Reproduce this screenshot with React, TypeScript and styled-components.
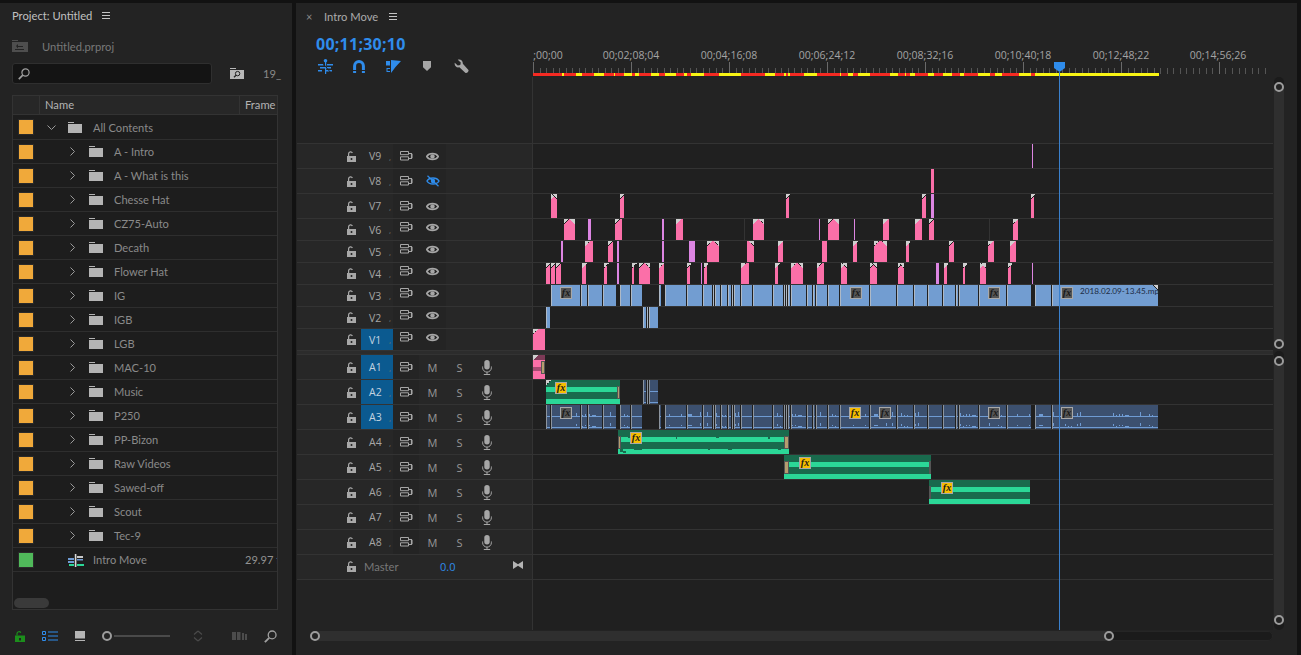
import React from "react";
import styled, { createGlobalStyle } from "styled-components";

const Global = createGlobalStyle`
  html, body { margin: 0; padding: 0; background: #121212; overflow: hidden; }
  * { box-sizing: border-box; }
`;

const FONT = `"Open Sans", "Noto Sans", "Liberation Sans", sans-serif`;
const UI = `Lato, "Open Sans", "Liberation Sans", sans-serif`;

const Root = styled.div`
  width: 1301px; height: 655px; padding: 3px 4px 0 0; display: grid;
  grid-template-columns: 292px 1fr; column-gap: 4px; background: #121212;
  font-family: ${FONT}; font-size: 11px; color: #a8a8a8; overflow: hidden;
`;
const ProjectPanel = styled.section`
  background: #232323; padding: 0 14px 0 12px; display: flex; flex-direction: column; height: 652px; font-family: ${UI};
`;
const TitleRow = styled.div`
  height: 25px; margin-bottom: 1px; display: flex; align-items: center; gap: 10px; color: #c0c0c0; font-size: 11.2px;
`;
const MenuIcon = styled.span`
  display: inline-block; width: 8px; height: 7px; border-top: 1px solid #c4c4c4; border-bottom: 1px solid #c4c4c4; position: relative;
  &::after { content: ""; position: absolute; left: 0; right: 0; top: 2px; height: 1px; background: #c4c4c4; }
`;
const PathRow = styled.div`
  margin-top: 7px; height: 20px; display: flex; align-items: center; gap: 14px; color: #787878; font-size: 11.2px;
`;
const SearchRow = styled.div`
  margin-top: 7px; height: 21px; display: flex; align-items: center; color: #a0a0a0;
  svg { flex: none; }
`;
const SearchBox = styled.div`
  width: 200px; flex: none; height: 21px; background: #141414; border: 1px solid #2f2f2f; border-radius: 3px;
  display: flex; align-items: center; padding-left: 5px; margin-right: 18px;
`;
const CountLabel = styled.span` margin-left: 19px; font-size: 11.2px; color: #8a8a8a; white-space: nowrap; `;
const Table = styled.div`
  margin-top: 11px; height: 515px; border: 1px solid #333; background: #1d1d1d; position: relative; overflow: hidden;
`;
const HeaderRow = styled.div`
  display: grid; grid-template-columns: 26px 200px 1fr; height: 19px; background: #272727; border-bottom: 1px solid #333;
  font-size: 11.2px; color: #b4b4b4; line-height: 18px;
`;
const HeaderCell = styled.div<{ $sep?: boolean }>`
  padding-left: 5px; border-left: ${p => (p.$sep ? "1px solid #333" : "none")}; overflow: hidden; white-space: nowrap;
`;
const BinRow = styled.div<{ $first?: boolean }>`
  height: ${p => (p.$first ? 25 : 24)}px; border-bottom: 1px solid #2e2e2e; display: flex; align-items: center; position: relative; color: #8a8a8a; font-size: 11.1px;
`;
const Swatch = styled.span<{ $c: string }>`
  width: 16px; height: 16px; margin-left: 5px; background: ${p => p.$c}; border: 1px solid #2a2a2a; flex: none;
`;
const Chevron = styled.span<{ $w: number }>`
  width: ${p => p.$w}px; flex: none; display: flex; justify-content: flex-end; color: #9a9a9a;
`;
const FolderWrap = styled.span<{ $l: number; $r?: number }>`
  margin-left: ${p => p.$l}px; margin-right: ${p => p.$r ?? 11}px; display: flex; flex: none;
`;
const RateCell = styled.span`
  position: absolute; left: 232px; right: 0; overflow: hidden; white-space: nowrap; color: #929292;
`;
const ScrollThumb = styled.div`
  position: absolute; left: 1px; bottom: 1px; width: 35px; height: 10px; background: #3a3a3a; border-radius: 5px;
`;
const Footer = styled.div`
  margin-top: 20px; height: 12px; display: flex; align-items: center;
`;
const FootItem = styled.span<{ $w: number; $c?: string; $pad?: number }>`
  width: ${p => p.$w}px; flex: none; display: flex; align-items: center; color: ${p => p.$c || "#a0a0a0"}; padding-left: ${p => p.$pad ?? 0}px;
`;
const ZoomLine = styled.span`
  width: 56px; height: 2px; background: #4a4a4a; margin-left: 2px; flex: none;
`;
const Ring = styled.span`
  width: 10px; height: 10px; border-radius: 50%; border: 2.5px solid #9c9c9c; background: #232323; flex: none; display: block;
`;

const TimelinePanel = styled.section`
  background: #232323; padding-left: 1px; height: 652px; display: flex; flex-direction: column;
`;
const TabBar = styled.div`
  height: 30px; display: flex; align-items: center; padding-left: 9px; padding-bottom: 3px; color: #ababab; font-size: 11.2px; font-family: ${UI};
`;
const CloseMark = styled.span` width: 18px; color: #8c8c8c; font-size: 11px; `;
const TabMenu = styled.span` margin-left: 11px; display: flex; `;
const Work = styled.div`
  display: grid; grid-template-columns: 976px 10px; column-gap: 1px; height: 597px;
`;
const Stage = styled.div` position: relative; display: flex; flex-direction: column; `;
const Head = styled.div` height: 110px; display: grid; grid-template-columns: 236px 740px; `;
const HeadLeft = styled.div` display: flex; flex-direction: column; `;
const Timecode = styled.div`
  height: 22px; line-height: 22px; padding-left: 19px; color: #2f8ceb; font-size: 16px; font-weight: 700; letter-spacing: 0.25px;
`;
const Tools = styled.div` padding-left: 11px; display: flex; height: 22px; align-items: center; `;
const Tool = styled.span<{ $c?: string }>`
  width: 34px; display: flex; justify-content: center; color: ${p => p.$c || "#a6a6a6"};
`;
const Ruler = styled.div`
  padding-top: 15px; display: flex; flex-direction: column;
`;
const RulerLabels = styled.div` height: 14px; position: relative; `;
const RulerLabel = styled.span<{ $x: number }>`
  position: absolute; left: ${p => p.$x}px; top: 0; transform: translateX(-50%); color: #a4a4a4; font-size: 10.5px; line-height: 14px; white-space: nowrap;
`;
const RulerBelow = styled.div` flex: 1; border-left: 1px solid #333; margin-left: -1px; `;
const RulerSvg = styled.svg` display: block; flex: none; `;

const Row = styled.div<{ $h: number; $audio?: boolean }>`
  height: ${p => p.$h}px; flex: none; display: grid; grid-template-columns: 236px 740px;
  border-top: ${p => (p.$audio ? "none" : "1px solid #333")};
  border-bottom: ${p => (p.$audio ? "1px solid #333" : "none")};
`;
const TrackHead = styled.div`
  background: #272727; border-right: 1px solid #333; display: grid;
  grid-template-columns: 46px 16px 2px 32px 26px 27px 27px 28px 1fr; align-items: center; 
`;
const LockCell = styled.span` grid-column: 2; display: flex; justify-content: center; color: #a8a8a8; `;
const NameCell = styled.span<{ $on?: boolean }>`
  grid-column: 4; align-self: stretch; display: flex; align-items: center; padding-left: 8px;
  background: ${p => (p.$on ? "#0b5a90" : "transparent")}; color: ${p => (p.$on ? "#c4d4e0" : "#a6a6a6")}; font-size: 10.5px;
`;
const NameDot = styled.span` margin-left: auto; padding-right: 2px; font-size: 8px; color: #777; `;
const IconCell = styled.span<{ $col: number; $c?: string; $lift?: boolean; $bare?: boolean }>`
  grid-column: ${p => p.$col}; display: flex; justify-content: center; align-items: center; align-self: stretch;
  color: ${p => p.$c || "#a6a6a6"}; background: ${p => (p.$bare ? "transparent" : "#242424")}; padding-bottom: ${p => (p.$lift ? "5px" : "0")};
`;
const LetterCell = styled(IconCell)` font-size: 11px; color: #979797; background: transparent; `;
const Lane = styled.div` position: relative; overflow: hidden; background: #202020; `;
const Divider = styled.div`
  height: 5px; flex: none; display: grid; grid-template-columns: 976px; background: #2c2c2c; border-top: 1px solid #333; border-bottom: 1px solid #333;
`;
const MasterHead = styled(TrackHead)` padding-bottom: 2px; `;
const MasterName = styled.span`
  grid-column: 4 / 6; color: #787878; font-size: 11.2px; padding-left: 3px; white-space: nowrap; font-family: ${UI};
`;
const MasterValue = styled.span`
  grid-column: 6 / 8; color: #2f8ceb; font-size: 11px; padding-left: 21px;
`;
const Bowtie = styled.span` grid-column: 9; display: flex; justify-content: flex-end; padding: 0 9px 3px 0; color: #b4b4b4; `;
const Filler = styled.div`
  flex: 1; display: grid; grid-template-columns: 236px 740px;
`;
const FillerLeft = styled.div` border-right: 1px solid #333; background: #232323; `;
const FillerLane = styled.div` background: #202020; `;

const Clip = styled.div`
  position: absolute; top: 0; bottom: 0;
`;
const PinkClip = styled(Clip)<{ $violet?: boolean }>`
  background: ${p => (p.$violet ? "#dc85e2" : "#fb6fa8")};
`;
const Corner = styled.span<{ $r?: boolean }>`
  position: absolute; top: 0; width: 5px; height: 5px;
  ${p => (p.$r ? "right: 0;" : "left: 0;")}
  background: linear-gradient(${p => (p.$r ? "225deg" : "135deg")}, #cfcfcf 0 50%, #202020 50% 54%, transparent 54%);
`;
const LaneCorner = styled(Corner)` right: 115px; `;
const BlueClip = styled(Clip)`
  background: #729dd1; border-left: 1px solid #aeb9c6;
`;
const AudioClip = styled(Clip)`
  background:
    linear-gradient(#6f9bd3, #6f9bd3) 0 11px / 100% 1px no-repeat,
    linear-gradient(#6f9bd3, #6f9bd3) 0 22px / 100% 1px no-repeat,
    #3c506f;
  border-left: 1px solid #8c949e;
`;
const GreenClip = styled(Clip)`
  background:
    linear-gradient(#2bd797, #2bd797) 0 7px / 100% 5px no-repeat,
    linear-gradient(#2bd797, #2bd797) 0 19px / 100% 5px no-repeat,
    #196a4d;
`;
const MixedClip = styled(Clip)`
  background: linear-gradient(#7d3a57 0 5px, #fb6fa8 5px 12px, #a84a73 12px 16px, #fb6fa8 16px);
`;
const Handle = styled.span<{ $r?: boolean; $w: number }>`
  position: absolute; top: 6px; height: 13px; width: ${p => p.$w}px; ${p => (p.$r ? "right: 0;" : "left: 0;")}
  background: #b59d6e; border: 1px solid #555;
`;
const Fx = styled.span<{ $on?: boolean; $x: number }>`
  position: absolute; top: 2px; left: ${p => p.$x}px; width: 12px; height: 12px; border: 1px solid #a8a8a8;
  background: ${p => (p.$on ? "#f6bd00" : "#555")}; color: #191919; font: italic 700 10px/10px "Liberation Serif", serif; text-align: center;
`;
const ClipName = styled.span`
  position: absolute; top: 0; left: 547px; color: #1c2c44; font: 8.2px/12px ${UI}; white-space: nowrap;
`;
const Sep = styled.span<{ $x: number }>`
  position: absolute; top: 0; bottom: 0; left: ${p => p.$x}px; width: 1px; background: #333;
`;
const Waves = styled.svg` position: absolute; left: 0; top: 0; `;
const Playhead = styled.div`
  position: absolute; left: 762px; top: 39px; bottom: 0; width: 1px; background: #3a80cc;
`;
const PlayCap = styled.svg` position: absolute; left: -5px; top: -10px; display: block; `;

const VBar = styled.div` padding-top: 44px; display: flex; flex-direction: column; gap: 2px; `;
const VTrack = styled.div<{ $h: number; $pb: number }>`
  height: ${p => p.$h}px; background: #1b1b1b; border-radius: 5px; padding: 10px 0 ${p => p.$pb}px; display: flex;
`;
const Thumb = styled.div`
  flex: 1; background: #2f2f2f; position: relative;
`;
const EndRing = styled(Ring)<{ $pos: string }>` position: absolute; ${p => p.$pos} `;
const HBarRow = styled.div` height: 10px; margin: 1px 0 0 13px; `;
const HTrack = styled.div`
  width: 963px; height: 10px; background: #1b1b1b; border: 1px solid #262626; border-radius: 5px; padding-left: 4px; display: flex;
`;
const HThumb = styled.div` width: 794px; background: #2f2f2f; position: relative; margin: -1px 0; `;

/* ---------- icons ---------- */
const Lock = () => (
  <svg width="9" height="11" viewBox="0 0 9 11"><path d="M0 5h9v6H0z M3.7 7v2h1.6V7z" fill="currentColor" fillRule="evenodd" /><path d="M1.6 5V2.6a2 2 0 0 1 3.8-.6" fill="none" stroke="currentColor" strokeWidth="1.2" /></svg>
);
const Sync = () => (
  <svg width="13" height="10" viewBox="0 0 13 10" fill="none" stroke="currentColor"><path d="M.5.5h8v3.2h-8zM.5 5.8h8V9h-8z" /><path d="M8.5 2.5h3v5h-3" strokeWidth="1.2" /><path d="M11 3v4h1.5V3z" fill="currentColor" stroke="none" /></svg>
);
const Eye = () => (
  <svg width="13" height="9" viewBox="0 0 13 9"><path d="M.7 4.5C3 .6 10 .6 12.3 4.5 10 8.4 3 8.4.7 4.5Z" fill="none" stroke="currentColor" strokeWidth="1.5" /><circle cx="6.5" cy="4.5" r="2.2" fill="currentColor" /></svg>
);
const EyeOff = () => (
  <svg width="14" height="12" viewBox="0 0 14 12"><path d="M1 6C3.3 2 10.7 2 13 6 10.7 10 3.3 10 1 6Z" fill="none" stroke="currentColor" strokeWidth="1.5" /><circle cx="7" cy="6" r="2.2" fill="currentColor" /><path d="M1.5.8 12.5 11.2" stroke="currentColor" strokeWidth="1.2" /></svg>
);
const Mic = () => (
  <svg width="10" height="15" viewBox="0 0 10 15"><rect x="2.3" y="0" width="5.4" height="9.5" rx="2.7" fill="currentColor" /><path d="M.6 6.5v1.2a4.4 4.4 0 0 0 8.8 0V6.5M5 12v2.3M1.8 14.5h6.4" fill="none" stroke="currentColor" /></svg>
);
const Menu3 = () => <MenuIcon />;
const Folder = () => (
  <svg width="14" height="11" viewBox="0 0 14 11"><path d="M0 0h6v1H0zM0 2h14v9H0z" fill="#b4b4b4" /></svg>
);
const ChevR = () => (
  <svg width="5" height="9" viewBox="0 0 5 9"><path d="M.5.5l4 4-4 4" fill="none" stroke="currentColor" /></svg>
);
const ChevD = () => (
  <svg width="9" height="5" viewBox="0 0 9 5"><path d="M.5.5l4 4 4-4" fill="none" stroke="currentColor" /></svg>
);
const SeqIcon = () => (
  <svg width="16" height="14" viewBox="0 0 16 14"><path d="M0 5h6v2H0zM0 8h6v2H0z" fill="#6f9bd3" /><path d="M9 3h6v2H9z" fill="#c8c8c8" /><path d="M9 6h6v1.5H9z" fill="#6f9bd3" /><path d="M1 11h5v2H1zM9 11h7v2H9z" fill="#2bd797" /><path d="M6.8 1h1.6v13H6.8z" fill="#d8d8d8" /></svg>
);
const Loupe = ({ s = 12 }: { s?: number }) => (
  <svg width={s} height={s} viewBox="0 0 12 12" fill="none" stroke="currentColor" strokeWidth="1.2"><circle cx="7.5" cy="4.5" r="3.6" /><path d="M4.8 7.2.8 11.2" strokeWidth="1.7" /></svg>
);
const UpFolder = () => (
  <svg width="16" height="12" viewBox="0 0 16 12"><path d="M0 0h6v1H0zM0 2h16v10H0z" fill="#4e4e4e" /><path d="M4 6 6 4v2h5v1H6v1.5z M3 9h9v1H3z" fill="#232323" /></svg>
);
const FindBin = () => (
  <svg width="14" height="11" viewBox="0 0 14 11"><path d="M0 0h6v1H0z" fill="#b8b8b8" /><path d="M0 2h14v9H0z" fill="#b8b8b8" /><circle cx="7.6" cy="5.6" r="2.2" fill="none" stroke="#232323" /><path d="M6 7.2 4 9.2" stroke="#232323" strokeWidth="1.3" /></svg>
);
const SnapTool = () => (
  <svg width="15" height="15" viewBox="0 0 15 15" fill="currentColor"><circle cx="7.5" cy="1.8" r="1.8" /><path d="M0 5h5.5v1.4H0zM9 5h6v1.4H9zM2 8h11v1.4H2zM0 11h4v1.4H0zM8 11h6v1.4H8z" /><path d="M7 3h1.2v12H7z" /><path d="M3 2 13 14" stroke="#232323" strokeWidth="1" /></svg>
);
const Magnet = () => (
  <svg width="12" height="13" viewBox="0 0 12 13" fill="none"><path d="M1.6 13V6a4.4 4.4 0 0 1 8.8 0v7" stroke="currentColor" strokeWidth="3" /><path d="M0 10h12v1H0z" fill="#232323" /></svg>
);
const LinkTool = () => (
  <svg width="15" height="13" viewBox="0 0 15 13"><path d="M0 1h4v4.5H0zM.5 8h3.5v4H.5z" fill="currentColor" /><path d="M1.5 9h2.5v2H1.5z" fill="#232323" /><path d="M5 0l10 1L9.5 7 5 13z" fill="currentColor" /></svg>
);
const MarkerTool = () => (
  <svg width="8" height="10" viewBox="0 0 8 10"><path d="M0 0h8v6.3L4 10 0 6.3z" fill="currentColor" /></svg>
);
const Wrench = () => (
  <svg width="15" height="15" viewBox="0 0 16 16"><path d="M.8 4 4 7 6.7 6.5 7.2 3.8 4 .8C6.7-.3 9.7 1.6 9.4 5L15.4 11.8C16.2 13 13.6 15.8 12.3 14.8L5.7 8.8C2.6 9.6.1 7 .8 4Z" fill="currentColor" /></svg>
);
const GreenLock = () => (
  <svg width="10" height="11" viewBox="0 0 10 11"><path d="M0 4.5h10V11H0z M4 7v2.5h2V7z" fill="currentColor" fillRule="evenodd" /><path d="M2 4.5V2.6a2 2 0 0 1 3.8-.8" fill="none" stroke="currentColor" strokeWidth="1.2" /></svg>
);
const ListIcon = () => (
  <svg width="16" height="10" viewBox="0 0 16 10" fill="none" stroke="currentColor"><path d="M.5.5h3v3h-3zM.5 6.5h3v3h-3z" /><path d="M6 1h10M6 5h10M6 9h10" /></svg>
);
const ThumbIcon = () => (
  <svg width="10" height="10" viewBox="0 0 10 10"><path d="M0 0h10v7.5H0zM0 9h10v1H0z" fill="#b4b4b4" /></svg>
);
const Diamond = () => (
  <svg width="10" height="12" viewBox="0 0 10 12"><path d="M5 1 9 4.5M5 1 1 4.5M5 11 9 7.5M5 11 1 7.5" stroke="#4a4a4a" strokeWidth="1.2" fill="none" /></svg>
);
const BarsIcon = () => (
  <svg width="15" height="8" viewBox="0 0 15 8"><path d="M0 0h4v8H0zM5 0h3.5v8H5zM10 1h2v7h-2zM13 2h2v6h-2z" fill="#4c4c4c" /></svg>
);
const Hourglass = () => (
  <svg width="10" height="8" viewBox="0 0 10 8"><path d="M0 0 5 3.2 10 0V8L5 4.8 0 8Z" fill="currentColor" /></svg>
);

/* ---------- data ---------- */
const ORIGIN = 533;
type C = [number, number, string?];

const V: Record<string, C[]> = {
  V9: [[1032, 1033, "v"]],
  V8: [[931, 934, "p"]],
  V7: [[551, 557, "lr"], [620, 624, "l"], [786, 789, "l"], [922, 926, "l"], [931, 934, "v"], [1031, 1034, "l"]],
  V6: [[564, 575, "lr"], [588, 591, "v"], [615, 622, "l"], [662, 664, "v"], [676, 683, "l"], [753, 764, "lr"], [819, 820, "v"], [828, 839, "lr"], [854, 855, "v"], [883, 889, "l"], [915, 922, "l"], [929, 934, "l"], [1013, 1018, "l"]],
  V5: [[561, 563, "v"], [585, 593, "l"], [608, 613, "l"], [617, 619, "v"], [662, 664, "v"], [689, 695, "v"], [707, 719, "lr"], [747, 754, "r"], [778, 783, "l"], [822, 827, "p"], [853, 857, "l"], [874, 887, "lr"], [906, 909, "l"], [949, 954, "l"], [988, 994, "l"], [1010, 1016, "l"]],
  V4: [[546, 550, "l"], [551, 555, "l"], [556, 561, "l"], [582, 586, "l"], [604, 607, "l"], [617, 619, "v"], [632, 634, "l"], [639, 650, "lr"], [659, 664, "l"], [687, 690, "l"], [701, 702, "v"], [704, 707, "l"], [741, 749, "l"], [775, 778, "l"], [791, 803, "lr"], [817, 824, "l"], [841, 847, "lr"], [870, 877, "lr"], [898, 904, "lr"], [936, 939, "v"], [944, 947, "l"], [963, 965, "l"], [980, 986, "lr"], [1008, 1011, "l"], [1032, 1033, "v"]],
  V1: [[533, 545, "l"]],
};
const SEGS: [number, number][] = [[551, 580], [581, 587], [588, 602], [603, 616], [620, 630], [631, 642], [659, 661], [665, 686], [687, 702], [703, 712], [713, 714], [715, 720], [721, 727], [728, 731], [732, 733], [734, 740], [741, 752], [753, 772], [773, 783], [784, 785], [786, 787], [788, 790], [791, 806], [807, 812], [813, 815], [816, 827], [828, 839], [840, 869], [870, 896], [897, 913], [914, 927], [928, 942], [943, 955], [956, 958], [959, 978], [979, 1006], [1007, 1031], [1035, 1051], [1052, 1158]];
const V2: [number, number][] = [[546, 550], [643, 646], [647, 648], [649, 658]];
const A2B: [number, number][] = [[643, 646], [647, 648], [649, 658]];
const A3: [number, number][] = [[546, 550], ...SEGS];

const YELLOW: [number, number][] = [[562, 564], [576, 582], [594, 604], [614, 615], [624, 632], [635, 639], [651, 659], [665, 676], [684, 687], [691, 704], [719, 741], [765, 775], [784, 786], [788, 790], [804, 817], [840, 841], [848, 853], [858, 870], [890, 898], [905, 906], [910, 915], [928, 934], [943, 952], [960, 964], [978, 990], [995, 1002], [1019, 1031], [1035, 1159]];
const LABELS: [string, number][] = [["00;02;08;04", 98], ["00;04;16;08", 196], ["00;06;24;12", 294], ["00;08;32;16", 392], ["00;10;40;18", 490], ["00;12;48;22", 588], ["00;14;56;26", 685]];

const BINS = ["A - Intro", "A - What is this", "Chesse Hat", "CZ75-Auto", "Decath", "Flower Hat", "IG", "IGB", "LGB", "MAC-10", "Music", "P250", "PP-Bizon", "Raw Videos", "Sawed-off", "Scout", "Tec-9"];

/* small notches on the green waveform of A4 */
const A4_MARKS: [number, number, number, number][] = [[2, 19, 3, 3], [5, 21, 3, 2], [10, 7, 2, 1], [16, 19, 8, 1], [58, 7, 1, 2], [90, 19, 2, 1], [98, 7, 3, 1], [110, 19, 4, 1], [150, 7, 2, 2], [160, 19, 3, 1]];

function wave(segs: [number, number][]) {
  const out: { x: number; y: number; h: number; w: number }[] = [];
  let n = 7;
  segs.forEach(([a, b]) => {
    for (let x = a + 1; x < b - 1; x += 3) {
      n = (n * 31 + 11) % 97;
      if (n % 3 === 0) {
        const h = 1 + (n % 4);
        const w = n % 11 === 0 ? 4 : 1;
        out.push({ x: x - ORIGIN, y: 11 - h, h, w });
        out.push({ x: x - ORIGIN, y: 22 - h, h: Math.max(1, h - 1), w });
      }
    }
  });
  return out;
}

const at = (a: number, b: number) => ({ left: a - ORIGIN, width: b - a });

const PinkRow = ({ items }: { items: C[] }) => (
  <>
    {items.map(([a, b, k], i) =>
      k === "v" ? (
        <PinkClip key={i} $violet style={at(a, b)} />
      ) : (
        <PinkClip key={i} style={at(a, b)}>
          {k && k.includes("l") && <Corner />}
          {k && k.includes("r") && <Corner $r />}
        </PinkClip>
      )
    )}
  </>
);

const Audio = ({ id, on, children }: { id: string; on?: boolean; children?: React.ReactNode }) => (
  <Row $h={25} $audio>
    <TrackHead>
      <LockCell><Lock /></LockCell>
      <NameCell $on={on}>{id}<NameDot>,</NameDot></NameCell>
      <IconCell $col={5}><Sync /></IconCell>
      <LetterCell $col={6}>M</LetterCell>
      <LetterCell $col={7}>S</LetterCell>
      <IconCell $col={8} $bare><Mic /></IconCell>
    </TrackHead>
    <Lane>{children}</Lane>
  </Row>
);

const Video = ({ id, h, on, hidden, children }: { id: string; h: number; on?: boolean; hidden?: boolean; children?: React.ReactNode }) => (
  <Row $h={h}>
    <TrackHead>
      <LockCell><Lock /></LockCell>
      <NameCell $on={on}>{id}<NameDot>,</NameDot></NameCell>
      <IconCell $col={5} $lift={h < 25}><Sync /></IconCell>
      <IconCell $col={6} $lift={h < 25} $c={hidden ? "#2f8ceb" : undefined}>{hidden ? <EyeOff /> : <Eye />}</IconCell>
    </TrackHead>
    <Lane>{children}</Lane>
  </Row>
);

export default function App() {
  const ticks: number[] = [];
  for (let i = 0; i * 6.533 <= 737; i++) ticks.push(i);
  const a3Wave = wave(A3);
  const a2Wave = wave(A2B);
  return (
    <Root>
      <Global />
      <ProjectPanel>
        <TitleRow>Project: Untitled<Menu3 /></TitleRow>
        <PathRow><UpFolder />Untitled.prproj</PathRow>
        <SearchRow>
          <SearchBox><Loupe /></SearchBox>
          <FindBin />
          <CountLabel>19_</CountLabel>
        </SearchRow>
        <Table>
          <HeaderRow>
            <HeaderCell />
            <HeaderCell $sep>Name</HeaderCell>
            <HeaderCell $sep>Frame</HeaderCell>
          </HeaderRow>
          <BinRow $first>
            <Swatch $c="#f0a93a" />
            <Chevron $w={22}><ChevD /></Chevron>
            <FolderWrap $l={12}><Folder /></FolderWrap>All Contents
          </BinRow>
          {BINS.map(b => (
            <BinRow key={b}>
              <Swatch $c="#f0a93a" />
              <Chevron $w={41}><ChevR /></Chevron>
              <FolderWrap $l={14}><Folder /></FolderWrap>{b}
            </BinRow>
          ))}
          <BinRow>
            <Swatch $c="#50b95a" />
            <Chevron $w={25} />
            <FolderWrap $l={9} $r={9}><SeqIcon /></FolderWrap>Intro Move
            <RateCell>29.97 fps</RateCell>
          </BinRow>
          <ScrollThumb />
        </Table>
        <Footer>
          <FootItem $w={30} $c="#1c8f1c" $pad={3}><GreenLock /></FootItem>
          <FootItem $w={33} $c="#2f8ceb"><ListIcon /></FootItem>
          <FootItem $w={27}><ThumbIcon /></FootItem>
          <FootItem $w={91}><Ring /><ZoomLine /></FootItem>
          <FootItem $w={39}><Diamond /></FootItem>
          <FootItem $w={32}><BarsIcon /></FootItem>
          <FootItem $w={14}><Loupe s={13} /></FootItem>
        </Footer>
      </ProjectPanel>

      <TimelinePanel>
        <TabBar>
          <CloseMark>×</CloseMark>Intro Move<TabMenu><Menu3 /></TabMenu>
        </TabBar>
        <Work>
          <Stage>
            <Head>
              <HeadLeft>
                <Timecode>00;11;30;10</Timecode>
                <Tools>
                  <Tool $c="#2f8ceb"><SnapTool /></Tool>
                  <Tool $c="#2f8ceb"><Magnet /></Tool>
                  <Tool $c="#2f8ceb"><LinkTool /></Tool>
                  <Tool><MarkerTool /></Tool>
                  <Tool><Wrench /></Tool>
                </Tools>
              </HeadLeft>
              <Ruler>
                <RulerLabels>
                  <RulerLabel $x={15}>;00;00</RulerLabel>
                  {LABELS.map(([t, x]) => <RulerLabel key={t} $x={x}>{t}</RulerLabel>)}
                </RulerLabels>
                <RulerSvg width="740" height="15" viewBox="0 0 740 15">
                  {ticks.map(i => {
                    const x = Math.round(i * 6.533);
                    const major = i % 15 === 0;
                    return <rect key={i} x={x} y={major ? 0 : 6} width="1" height={major ? 12 : 6} fill={major ? "#6a6a6a" : "#555"} />;
                  })}
                  <rect x="0" y="11" width="626" height="3" fill="#f52a22" />
                  {YELLOW.map(([a, b]) => <rect key={a} x={a - ORIGIN} y="11" width={b - a} height="3" fill="#f8f414" />)}
                </RulerSvg>
                <RulerBelow />
              </Ruler>
            </Head>

            <Video id="V9" h={25}><PinkRow items={V.V9} /></Video>
            <Video id="V8" h={25} hidden><PinkRow items={V.V8} /></Video>
            <Video id="V7" h={25}><PinkRow items={V.V7} /></Video>
            <Video id="V6" h={22}><PinkRow items={V.V6} /><Sep $x={211} /><Sep $x={456} /></Video>
            <Video id="V5" h={22}><PinkRow items={V.V5} /></Video>
            <Video id="V4" h={22}><PinkRow items={V.V4} /></Video>
            <Video id="V3" h={22}>
              {SEGS.map(([a, b]) => <BlueClip key={a} style={at(a, b)} />)}
              <LaneCorner $r />
              <Fx $x={27}>fx</Fx>
              <Fx $x={317}>fx</Fx>
              <Fx $x={455}>fx</Fx>
              <Fx $x={528}>fx</Fx>
              <ClipName>2018.02.09-13.45.mp</ClipName>
            </Video>
            <Video id="V2" h={22}>
              {V2.map(([a, b]) => <BlueClip key={a} style={at(a, b)} />)}
            </Video>
            <Video id="V1" h={22} on><PinkRow items={V.V1} /></Video>
            <Divider />
            <Audio id="A1" on>
              <MixedClip style={at(533, 545)}>
                <Corner />
                <Handle $r $w={4} />
              </MixedClip>
            </Audio>
            <Audio id="A2" on>
              <GreenClip style={at(546, 620)}><Corner /><Handle $r $w={3} /></GreenClip>
              <Fx $on $x={22}>fx</Fx>
              {A2B.map(([a, b]) => <AudioClip key={a} style={at(a, b)} />)}
              <Waves width="740" height="24" viewBox="0 0 740 24">
                {a2Wave.map((w, i) => <rect key={i} x={w.x} y={w.y} width={w.w} height={w.h} fill="#6f9bd3" />)}
              </Waves>
            </Audio>
            <Audio id="A3" on>
              {A3.map(([a, b]) => <AudioClip key={a} style={at(a, b)} />)}
              <Waves width="740" height="24" viewBox="0 0 740 24">
                {a3Wave.map((w, i) => <rect key={i} x={w.x} y={w.y} width={w.w} height={w.h} fill="#6f9bd3" />)}
              </Waves>
              <Fx $x={27}>fx</Fx>
              <Fx $on $x={316}>fx</Fx>
              <Fx $x={346}>fx</Fx>
              <Fx $x={455}>fx</Fx>
              <Fx $x={528}>fx</Fx>
            </Audio>
            <Audio id="A4">
              <GreenClip style={at(618, 789)}>
                <Waves width="171" height="24" viewBox="0 0 171 24">
                  {A4_MARKS.map(([x, y, w, h]) => <rect key={x} x={x} y={y} width={w} height={h} fill="#196a4d" />)}
                </Waves>
                <Handle $w={3} /><Handle $r $w={5} />
              </GreenClip>
              <Fx $on $x={97}>fx</Fx>
            </Audio>
            <Audio id="A5">
              <GreenClip style={at(784, 931)}><Handle $w={5} /><Handle $r $w={2} /></GreenClip>
              <Fx $on $x={266}>fx</Fx>
            </Audio>
            <Audio id="A6">
              <GreenClip style={at(929, 1030)}><Handle $w={2} /></GreenClip>
              <Fx $on $x={408}>fx</Fx>
            </Audio>
            <Audio id="A7" />
            <Audio id="A8" />
            <Row $h={25} $audio>
              <MasterHead>
                <LockCell><Lock /></LockCell>
                <MasterName>Master</MasterName>
                <MasterValue>0.0</MasterValue>
                <Bowtie><Hourglass /></Bowtie>
              </MasterHead>
              <Lane />
            </Row>
            <Filler><FillerLeft /><FillerLane /></Filler>

            <Playhead>
              <PlayCap width="11" height="10" viewBox="0 0 11 10"><path d="M0 0h11v6L5.5 10 0 6z" fill="#2f8ceb" /></PlayCap>
            </Playhead>
          </Stage>
          <VBar>
            <VTrack $h={272} $pb={5}>
              <Thumb>
                <EndRing $pos="top: -5px; left: 0;" />
                <EndRing $pos="bottom: -5px; left: 0;" />
              </Thumb>
            </VTrack>
            <VTrack $h={279} $pb={10}>
              <Thumb>
                <EndRing $pos="top: -5px; left: 0;" />
                <EndRing $pos="bottom: -5px; left: 0;" />
              </Thumb>
            </VTrack>
          </VBar>
        </Work>
        <HBarRow>
          <HTrack>
            <HThumb>
              <EndRing $pos="top: 0; left: -5px;" />
              <EndRing $pos="top: 0; right: -5px;" />
            </HThumb>
          </HTrack>
        </HBarRow>
      </TimelinePanel>
    </Root>
  );
}
